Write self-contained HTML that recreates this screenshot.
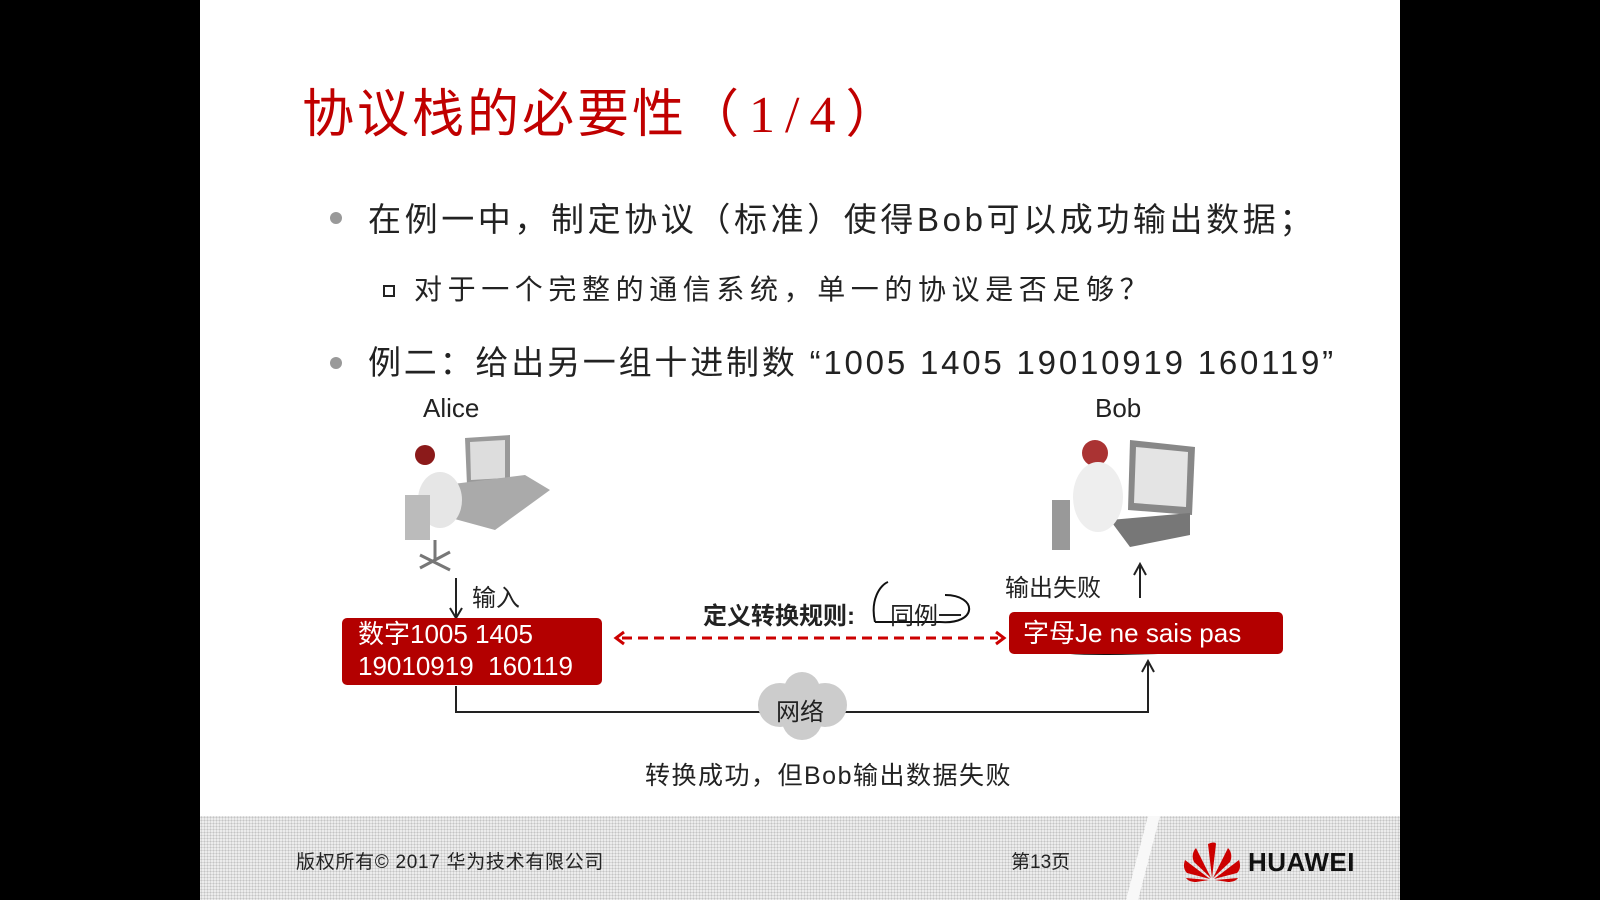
<!DOCTYPE html>
<html><head><meta charset="utf-8"><style>
body{margin:0;width:1600px;height:900px;background:#000;position:relative;overflow:hidden;font-family:"Liberation Sans","Noto Sans CJK SC",sans-serif}
.slide{position:absolute;left:200px;top:0;width:1200px;height:900px;background:#fff}
.t{position:absolute;white-space:nowrap;color:#222}
.footer{position:absolute;left:200px;top:816px;width:1200px;height:84px;background:#ececec;background-image:radial-gradient(#c4c4c4 0.8px,transparent 1px);background-size:3px 3px}
.box{position:absolute;background:#b30000;color:#fff;border-radius:5px;font-size:26px;line-height:32px}
</style></head><body>
<div class="slide"></div>
<div class="footer"></div>
<svg style="position:absolute;left:1120px;top:816px" width="60" height="84"><polygon points="28,0 40,0 18,84 6,84" fill="#f8f8f8"/></svg>
<div class="t" style="left:302px;top:72px;font-size:52px;color:#c00000;letter-spacing:3px;font-family:'Noto Sans CJK SC',sans-serif">协议栈的必要性<span style="font-family:'Liberation Serif',serif;letter-spacing:10px">（1/4）</span></div>
<div class="t" style="left:330px;top:212px;width:12px;height:12px;border-radius:50%;background:#999"></div>
<div class="t" style="left:368px;top:193px;font-size:33px;letter-spacing:3.6px">在例一中，制定协议（标准）使得Bob可以成功输出数据；</div>
<div class="t" style="left:383px;top:285px;width:8px;height:8px;border:2px solid #222"></div>
<div class="t" style="left:414px;top:268px;font-size:28px;letter-spacing:5.6px">对于一个完整的通信系统，单一的协议是否足够？</div>
<div class="t" style="left:330px;top:357px;width:12px;height:12px;border-radius:50%;background:#999"></div>
<div class="t" style="left:368px;top:336px;font-size:33px;letter-spacing:2.8px">例二：给出另一组十进制数 “1005 1405 19010919 160119”</div>
<div class="t" style="left:423px;top:393px;font-size:26px">Alice</div>
<div class="t" style="left:1095px;top:393px;font-size:26px">Bob</div>
<svg style="position:absolute;left:405px;top:430px" width="150" height="150">
<polygon points="60,8 105,5 105,52 62,55" fill="#999"/><polygon points="65,12 100,10 100,48 66,50" fill="#ddd"/>
<polygon points="40,55 120,45 145,60 90,100 35,85" fill="#aaa"/>
<circle cx="20" cy="25" r="10" fill="#8b1a1a"/><ellipse cx="35" cy="70" rx="22" ry="28" fill="#e6e6e6"/>
<rect x="0" y="65" width="25" height="45" fill="#bbb"/><path d="M30 110 L30 130 M15 125 L45 140 M45 122 L15 138" stroke="#777" stroke-width="3"/>
</svg>
<svg style="position:absolute;left:1050px;top:435px" width="150" height="120">
<polygon points="80,5 145,12 142,80 78,75" fill="#888"/><polygon points="86,12 138,17 136,72 84,68" fill="#e4e4e4"/>
<polygon points="60,85 140,78 140,100 80,112" fill="#777"/>
<circle cx="45" cy="18" r="13" fill="#a33"/><ellipse cx="48" cy="62" rx="25" ry="35" fill="#eee"/>
<rect x="2" y="65" width="18" height="50" fill="#999"/>
</svg>
<svg style="position:absolute;left:0;top:0" width="1600" height="900">
<path d="M456 578 V616 M450 608 L456 618 L462 608" stroke="#222" stroke-width="2" fill="none"/>
<path d="M1140 598 V565 M1134 575 L1140 564 L1146 575" stroke="#222" stroke-width="2" fill="none"/>
<path d="M456 686 V712 H1148 V662 M1142 672 L1148 661 L1154 672" stroke="#222" stroke-width="2" fill="none"/>
<path d="M622 638 H998" stroke="#c00" stroke-width="3" stroke-dasharray="10 6"/>
<path d="M624 632 L616 638 L624 644 M996 632 L1004 638 L996 644" stroke="#c00" stroke-width="3" fill="none"/>
<path d="M875 622 C870 600 880 585 888 582 M945 595 C978 595 978 625 940 622 L875 622" stroke="#111" stroke-width="2" fill="none"/>
<path d="M1035 648 C1080 660 1180 650 1230 652" stroke="#111" stroke-width="2" fill="none"/>
<g fill="#ccc"><circle cx="802" cy="690" r="18"/><circle cx="780" cy="705" r="22"/><circle cx="825" cy="705" r="22"/><circle cx="802" cy="720" r="20"/></g>
</svg>
<div class="box" style="left:342px;top:618px;width:260px;height:67px;padding-left:16px;box-sizing:border-box">数字1005 1405<br>19010919&nbsp;&nbsp;160119</div>
<div class="box" style="left:1009px;top:612px;width:274px;height:42px;padding-left:14px;box-sizing:border-box;line-height:42px">字母Je ne sais pas</div>
<div class="t" style="left:472px;top:578px;font-size:24px">输入</div>
<div class="t" style="left:1005px;top:568px;font-size:24px">输出失败</div>
<div class="t" style="left:703px;top:596px;font-size:24px;font-weight:bold">定义转换规则:</div>
<div class="t" style="left:890px;top:596px;font-size:24px">同例一</div>
<div class="t" style="left:776px;top:692px;font-size:24px">网络</div>
<div class="t" style="left:645px;top:756px;font-size:25px;letter-spacing:1.5px">转换成功，但Bob输出数据失败</div>
<div class="t" style="left:296px;top:847px;font-size:19px;letter-spacing:0.7px">版权所有© 2017 华为技术有限公司</div>
<div class="t" style="left:1011px;top:847px;font-size:19px">第13页</div>
<svg style="position:absolute;left:1182px;top:838px" width="60" height="44">
<g fill="#c00">
<path d="M30 40 L26 6 C30 4 34 4 34 6 Z"/><path d="M29 40 L14 10 C10 14 10 20 12 24 Z"/><path d="M31 40 L46 10 C50 14 50 20 48 24 Z"/>
<path d="M28 41 L3 22 C1 28 2 32 5 35 Z"/><path d="M32 41 L57 22 C59 28 58 32 55 35 Z"/>
<path d="M27 42 L4 40 C6 43 10 44 14 44 Z"/><path d="M33 42 L56 40 C54 43 50 44 46 44 Z"/>
</g></svg>
<div class="t" style="left:1248px;top:847px;font-size:26px;font-weight:bold;color:#111;letter-spacing:0.5px">HUAWEI</div>
</body></html>
